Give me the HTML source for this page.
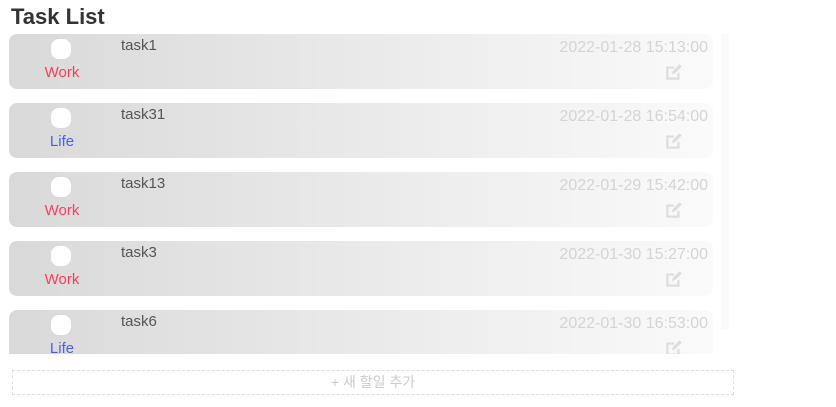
<!DOCTYPE html>
<html><head><style>
body{margin:0;width:836px;height:407px;background:#fff;font-family:"Liberation Sans","DejaVu Sans","Noto Sans CJK KR",sans-serif;overflow:hidden;position:relative}
h1{position:absolute;left:11px;top:4px;margin:0;font-size:22px;font-weight:bold;color:#333}
.list{position:absolute;left:9px;top:34px;width:704px;height:320px;overflow:hidden}
.card{position:absolute;left:0;width:704px;height:55px;border-radius:8px;background:linear-gradient(90deg,#d9d9d9,#fafafa)}
.cb{position:absolute;left:42px;top:5px;width:20px;height:20px;border-radius:8px;background:#fff}
.cat{position:absolute;left:0;width:106px;text-align:center;top:30px;font-size:15px}
.w{color:#ff3b5c}.l{color:#4a5ff0}
.t{position:absolute;left:112px;top:3px;font-size:15px;color:#555}
.d{position:absolute;right:5px;top:5px;font-size:16px;color:#d4d4d4}
.e{position:absolute;left:655px;top:28px}
.sb{position:absolute;left:721px;top:34px;width:8px;height:296px;background:#fafafa}
.add{position:absolute;left:12px;top:370px;width:722px;height:25px;border:1px dashed #ddd;box-sizing:border-box;text-align:center;font-size:14px;line-height:23px;color:#ccc}
</style></head><body>
<h1>Task List</h1>
<div class="sb"></div>
<div class="list">
<div class="card" style="top:0"><div class="cb"></div><div class="cat w">Work</div><div class="t">task1</div><div class="d">2022-01-28 15:13:00</div><svg class="e" width="20" height="20" viewBox="0 0 18 18"><path d="M13 10v5H3V5h6" fill="none" stroke="#ddd" stroke-width="2"/><path d="M7 11l1-3 6-6 2 2-6 6z" fill="#ddd"/></svg></div>
<div class="card" style="top:69px"><div class="cb"></div><div class="cat l">Life</div><div class="t">task31</div><div class="d">2022-01-28 16:54:00</div><svg class="e" width="20" height="20" viewBox="0 0 18 18"><path d="M13 10v5H3V5h6" fill="none" stroke="#ddd" stroke-width="2"/><path d="M7 11l1-3 6-6 2 2-6 6z" fill="#ddd"/></svg></div>
<div class="card" style="top:138px"><div class="cb"></div><div class="cat w">Work</div><div class="t">task13</div><div class="d">2022-01-29 15:42:00</div><svg class="e" width="20" height="20" viewBox="0 0 18 18"><path d="M13 10v5H3V5h6" fill="none" stroke="#ddd" stroke-width="2"/><path d="M7 11l1-3 6-6 2 2-6 6z" fill="#ddd"/></svg></div>
<div class="card" style="top:207px"><div class="cb"></div><div class="cat w">Work</div><div class="t">task3</div><div class="d">2022-01-30 15:27:00</div><svg class="e" width="20" height="20" viewBox="0 0 18 18"><path d="M13 10v5H3V5h6" fill="none" stroke="#ddd" stroke-width="2"/><path d="M7 11l1-3 6-6 2 2-6 6z" fill="#ddd"/></svg></div>
<div class="card" style="top:276px"><div class="cb"></div><div class="cat l">Life</div><div class="t">task6</div><div class="d">2022-01-30 16:53:00</div><svg class="e" width="20" height="20" viewBox="0 0 18 18"><path d="M13 10v5H3V5h6" fill="none" stroke="#ddd" stroke-width="2"/><path d="M7 11l1-3 6-6 2 2-6 6z" fill="#ddd"/></svg></div>
</div>
<div class="add">+ 새 할일 추가</div>
</body></html>
